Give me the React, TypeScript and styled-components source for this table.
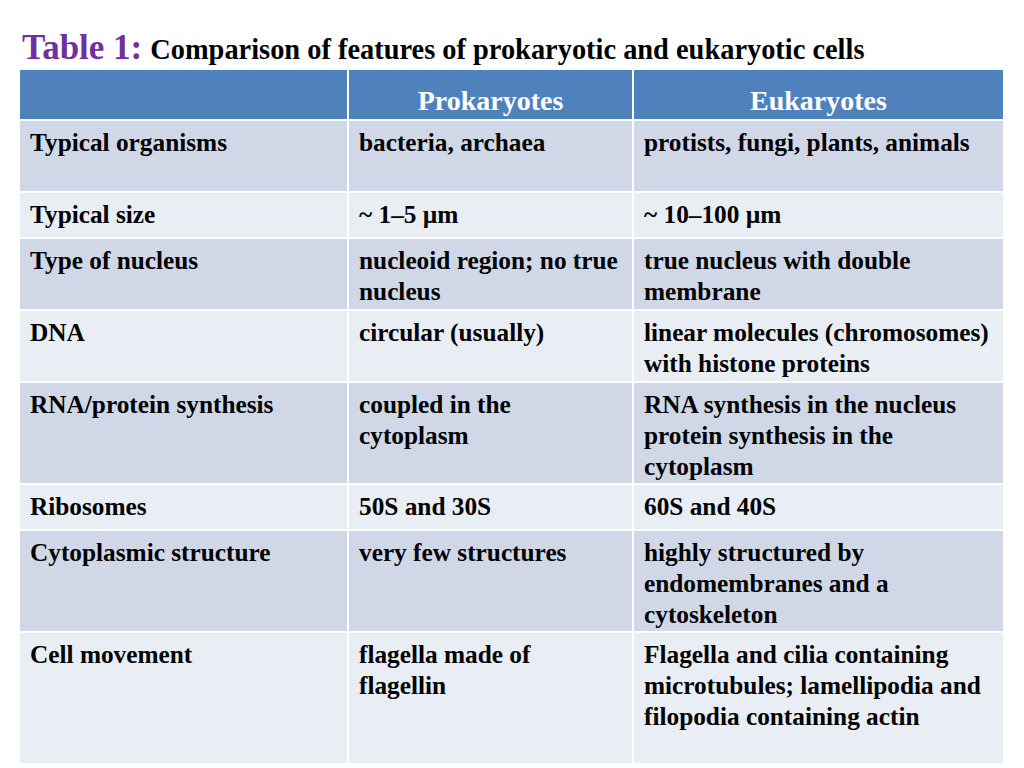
import React from "react";
import styled, { createGlobalStyle } from "styled-components";

const Global = createGlobalStyle`
  html, body { margin: 0; padding: 0; background: #ffffff; }
  body { font-family: "Liberation Serif", "Times New Roman", serif; }
`;

const Page = styled.div`
  width: 1024px;
  height: 768px;
  box-sizing: border-box;
  padding: 26px 20px 0 20px;
  overflow: hidden;
`;

const Title = styled.h1`
  margin: 0 0 0 2px;
  height: 44px;
  font-weight: bold;
  color: #000;
  font-size: 28.4px;
  line-height: 44px;
  white-space: nowrap;
`;

const TitleLabel = styled.span`
  color: #7030a0;
  font-size: 35px;
  margin-right: 8px;
`;

const Table = styled.div`
  display: grid;
  grid-template-columns: 327px 283px 369px;
  grid-template-rows: 49px 70px 44px 70px 70px 100px 44px 100px 130px;
  gap: 2px;
  background: #ffffff;
  width: 983px;
`;

const HeadCell = styled.div`
  background: #4f81bd;
  color: #ffffff;
  font-weight: bold;
  font-size: 28px;
  line-height: 34px;
  display: flex;
  align-items: flex-end;
  justify-content: center;
  padding-bottom: 1px;
  box-sizing: border-box;
`;

const Cell = styled.div<{ $shade: boolean }>`
  background: ${(p) => (p.$shade ? "#d0d8e8" : "#e9edf4")};
  color: #000000;
  font-weight: bold;
  font-size: 25.3px;
  line-height: 31px;
  padding: 6px 4px 0 10px;
  box-sizing: border-box;
  overflow: hidden;
  white-space: nowrap;
`;

const rows: [string, string, string][] = [
  ["Typical organisms", "bacteria, archaea", "protists, fungi, plants, animals"],
  ["Typical size", "~ 1–5 µm", "~ 10–100 µm"],
  ["Type of nucleus", "nucleoid region; no true\nnucleus", "true nucleus with double\nmembrane"],
  ["DNA", "circular (usually)", "linear molecules (chromosomes)\nwith histone proteins"],
  ["RNA/protein synthesis", "coupled in the\ncytoplasm", "RNA synthesis in the nucleus\nprotein synthesis in the\ncytoplasm"],
  ["Ribosomes", "50S and 30S", "60S and 40S"],
  ["Cytoplasmic structure", "very few structures", "highly structured by\nendomembranes and a\ncytoskeleton"],
  ["Cell movement", "flagella made of\nflagellin", "Flagella and cilia containing\nmicrotubules; lamellipodia and\nfilopodia containing actin"],
];

const Line = styled.div`
  display: block;
`;

const Lines: React.FC<{ text: string }> = ({ text }) => (
  <>
    {text.split("\n").map((t, i) => (
      <Line key={i}>{t}</Line>
    ))}
  </>
);

export default function App() {
  return (
    <>
      <Global />
      <Page>
        <Title>
          <TitleLabel>Table 1:</TitleLabel>Comparison of features of prokaryotic and eukaryotic cells
        </Title>
        <Table>
          <HeadCell />
          <HeadCell>Prokaryotes</HeadCell>
          <HeadCell>Eukaryotes</HeadCell>
          {rows.map((r, i) =>
            r.map((c, j) => (
              <Cell key={`${i}-${j}`} $shade={i % 2 === 0}>
                <Lines text={c} />
              </Cell>
            ))
          )}
        </Table>
      </Page>
    </>
  );
}
